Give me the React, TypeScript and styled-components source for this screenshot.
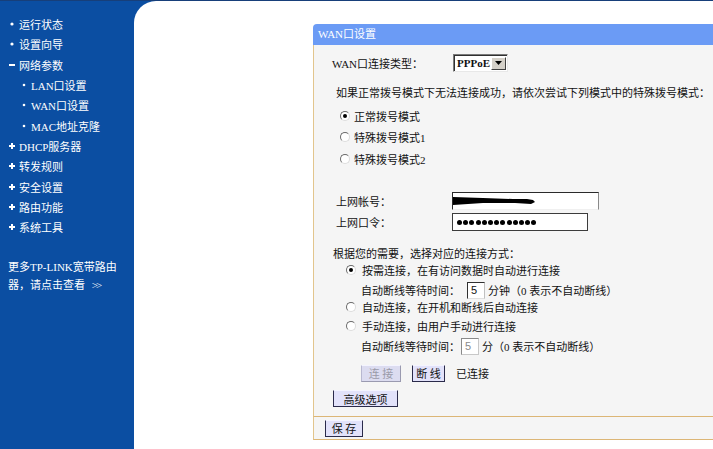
import styled, { createGlobalStyle } from 'styled-components';

const GlobalStyle = createGlobalStyle`
  html, body {
    margin: 0;
    padding: 0;
  }
  body {
    font-family: "Liberation Serif", "Noto Sans CJK SC", serif;
    font-size: 11px;
  }
`;

type MarkKind = 'dot' | 'minus' | 'plus' | 'sub';

const menu: { label: string; mark: MarkKind }[] = [
  { label: '运行状态', mark: 'dot' },
  { label: '设置向导', mark: 'dot' },
  { label: '网络参数', mark: 'minus' },
  { label: 'LAN口设置', mark: 'sub' },
  { label: 'WAN口设置', mark: 'sub' },
  { label: 'MAC地址克隆', mark: 'sub' },
  { label: 'DHCP服务器', mark: 'plus' },
  { label: '转发规则', mark: 'plus' },
  { label: '安全设置', mark: 'plus' },
  { label: '路由功能', mark: 'plus' },
  { label: '系统工具', mark: 'plus' },
];

function MenuMark({ kind }: { kind: MarkKind }) {
  return (
    <svg width="14" height="8" viewBox="0 0 14 8">
      {kind === 'dot' && <circle cx="7" cy="4" r="1.6" fill="#fff" />}
      {kind === 'sub' && <circle cx="7" cy="4" r="1.3" fill="#fff" />}
      {kind === 'minus' && <rect x="4" y="3" width="6" height="2" fill="#fff" />}
      {kind === 'plus' && (
        <>
          <rect x="4" y="3" width="6" height="2" fill="#fff" />
          <rect x="6" y="1" width="2" height="6" fill="#fff" />
        </>
      )}
    </svg>
  );
}

export default function App() {
  return (
    <>
      <GlobalStyle />
      <Frame>
        <Sidebar>
          {menu.map((item) => (
            <MenuItem key={item.label} $sub={item.mark === 'sub'}>
              <MenuMark kind={item.mark} />
              <span>{item.label}</span>
            </MenuItem>
          ))}
          <MoreLink>
            更多TP-LINK宽带路由
            <br />
            器，请点击查看 <Chevrons>&gt;&gt;</Chevrons>
          </MoreLink>
        </Sidebar>

        <Main>
          <Panel>
            <PanelHeader>WAN口设置</PanelHeader>
            <PanelBody>
              <Row $top={8} $h={20} $indent={18}>
                <FieldLabel $w={121}>WAN口连接类型：</FieldLabel>
                <Select>
                  <span>PPPoE</span>
                  <SelectArrow>
                    <svg width="7" height="4" viewBox="0 0 7 4">
                      <polygon points="0,0 7,0 3.5,4" fill="#000" />
                    </svg>
                  </SelectArrow>
                </Select>
              </Row>
              <Row $top={10} $h={18} $indent={22}>
                如果正常拨号模式下无法连接成功，请依次尝试下列模式中的特殊拨号模式：
              </Row>
              <Row $top={6} $h={18} $indent={26} $gap={4}>
                <Radio $checked />
                正常拨号模式
              </Row>
              <Row $top={3} $h={18} $indent={26} $gap={4}>
                <Radio />
                特殊拨号模式1
              </Row>
              <Row $top={4} $h={18} $indent={26} $gap={4}>
                <Radio />
                特殊拨号模式2
              </Row>

              <Row $top={23} $h={20} $indent={22}>
                <FieldLabel $w={116}>上网帐号：</FieldLabel>
                <TextBox $w={147} $variant="account">
                  <svg width="82" height="10" viewBox="0 0 82 10">
                    <path
                      d="M0 1 L30 2 L60 3 L74 3 L80 4 L82 6 L78 8 L62 7 L30 7 L0 9 Z"
                      fill="#000"
                    />
                  </svg>
                </TextBox>
              </Row>
              <Row $top={1} $h={20} $indent={22}>
                <FieldLabel $w={116}>上网口令：</FieldLabel>
                <TextBox $w={136} $variant="password">
                  {Array.from({ length: 13 }, (_, i) => (
                    <Dot key={i} />
                  ))}
                </TextBox>
              </Row>

              <Row $top={13} $h={16} $indent={19}>
                根据您的需要，选择对应的连接方式：
              </Row>
              <Row $top={1} $h={16} $indent={32} $gap={6}>
                <Radio $checked />
                按需连接，在有访问数据时自动进行连接
              </Row>
              <Row $top={3} $h={18} $indent={47}>
                自动断线等待时间：
                <SmallInput $ml={7}>5</SmallInput>
                <Suffix>分钟（0 表示不自动断线）</Suffix>
              </Row>
              <Row $top={0} $h={16} $indent={32} $gap={6}>
                <Radio />
                自动连接，在开机和断线后自动连接
              </Row>
              <Row $top={3} $h={16} $indent={32} $gap={6}>
                <Radio />
                手动连接，由用户手动进行连接
              </Row>
              <Row $top={3} $h={18} $indent={47}>
                自动断线等待时间：
                <SmallInput $ml={1} $disabled>
                  5
                </SmallInput>
                <Suffix>分（0 表示不自动断线）</Suffix>
              </Row>

              <Row $top={9} $h={18} $indent={47} $gap={11}>
                <Button $w={40} $disabled>
                  连 接
                </Button>
                <Button $w={33}>断 线</Button>
                <Status>已连接</Status>
              </Row>
              <Row $top={8} $h={17} $indent={19}>
                <Button $w={65}>高级选项</Button>
              </Row>
            </PanelBody>
            <PanelFooter>
              <Button $w={38}>保 存</Button>
            </PanelFooter>
          </Panel>
        </Main>
      </Frame>
    </>
  );
}

const Frame = styled.div`
  display: flex;
  width: 713px;
  height: 449px;
  box-sizing: border-box;
  overflow: hidden;
  background: #0b4ea2;
  border-top: 1px solid #173f7a;
`;

const Sidebar = styled.nav`
  width: 134px;
  flex-shrink: 0;
  padding-top: 13px;
  color: #fff;
`;

const MenuItem = styled.div<{ $sub?: boolean }>`
  display: flex;
  align-items: center;
  height: 20.3px;
  padding-left: ${({ $sub }) => ($sub ? 17 : 5)}px;
  white-space: nowrap;
`;

const MoreLink = styled.div`
  margin-top: 21px;
  padding-left: 8px;
  line-height: 18px;
  white-space: nowrap;
`;

const Chevrons = styled.span`
  letter-spacing: -2px;
  margin-left: 4px;
`;

const Main = styled.main`
  flex: 1;
  min-width: 0;
  background: #fff;
  border-top-left-radius: 22px;
  padding: 23px 0 0 179px;
  overflow: hidden;
`;

const Panel = styled.section`
  width: 440px;
  color: #111;
`;

const PanelHeader = styled.div`
  height: 21px;
  line-height: 21px;
  padding-left: 5px;
  background: #6b9bf5;
  border-top-left-radius: 4px;
  color: #fff;
`;

const PanelBody = styled.div`
  display: flex;
  flex-direction: column;
  padding-bottom: 9px;
  background: #f5f5f5;
  border-left: 1px solid #e2c58d;
`;

const PanelFooter = styled.div`
  display: flex;
  align-items: center;
  height: 22px;
  padding-left: 11px;
  background: #f5f5f5;
  border: 1px solid #dcb676;
  border-right: none;
  border-left-color: #e2c58d;
`;

const Row = styled.div<{ $top: number; $h: number; $indent: number; $gap?: number }>`
  display: flex;
  align-items: center;
  height: ${({ $h }) => $h}px;
  margin-top: ${({ $top }) => $top}px;
  padding-left: ${({ $indent }) => $indent}px;
  gap: ${({ $gap }) => $gap ?? 0}px;
  white-space: nowrap;
`;

const FieldLabel = styled.span<{ $w: number }>`
  width: ${({ $w }) => $w}px;
  flex-shrink: 0;
`;

const Select = styled.div`
  display: flex;
  align-items: center;
  width: 55px;
  height: 18px;
  box-sizing: border-box;
  padding: 0 1px 0 3px;
  background: #fff;
  border: 1px solid;
  border-color: #7a7a7a #e8e8e8 #e8e8e8 #7a7a7a;
  box-shadow: inset 1px 1px 0 #303030;
  font-weight: bold;
`;

const SelectArrow = styled.span`
  display: flex;
  align-items: center;
  justify-content: center;
  margin-left: auto;
  width: 15px;
  height: 13px;
  box-sizing: border-box;
  background: #d4d0c8;
  border: 1px solid;
  border-color: #fff #404040 #404040 #fff;
`;

const Radio = styled.span<{ $checked?: boolean }>`
  position: relative;
  flex-shrink: 0;
  width: 10px;
  height: 10px;
  box-sizing: border-box;
  border-radius: 50%;
  border: 1px solid;
  border-color: #6a6a6a #dcdcdc #dcdcdc #6a6a6a;
  background: #fff;

  &::after {
    content: '';
    display: ${({ $checked }) => ($checked ? 'block' : 'none')};
    position: absolute;
    left: 2px;
    top: 2px;
    width: 4px;
    height: 4px;
    border-radius: 50%;
    background: #000;
  }
`;

const TextBox = styled.div<{ $w: number; $variant: 'account' | 'password' }>`
  display: flex;
  align-items: center;
  gap: 1.2px;
  width: ${({ $w }) => $w}px;
  height: 18px;
  box-sizing: border-box;
  padding-left: ${({ $variant }) => ($variant === 'password' ? 4 : 0)}px;
  background: #fff;
  border: 1px solid;
  border-color: ${({ $variant }) =>
    $variant === 'password' ? '#3c3c3c' : '#2a2a2a #8a8a8a #f0f0f0 #2a2a2a'};
`;

const Dot = styled.span`
  width: 5px;
  height: 5px;
  border-radius: 50%;
  background: #000;
`;

const SmallInput = styled.span<{ $ml: number; $disabled?: boolean }>`
  display: flex;
  align-items: center;
  width: 18px;
  height: 17px;
  box-sizing: border-box;
  margin-left: ${({ $ml }) => $ml}px;
  padding-left: 3px;
  background: #fff;
  border: 1px solid;
  border-color: ${({ $disabled }) =>
    $disabled ? '#8a8a8a #c8c8c8 #c8c8c8 #8a8a8a' : '#303030 #c0c0c0 #e0e0e0 #303030'};
  color: ${({ $disabled }) => ($disabled ? '#8a8a8a' : '#111')};
  font-family: "Liberation Sans", sans-serif;
`;

const Suffix = styled.span`
  margin-left: 3px;
`;

const Button = styled.span<{ $w: number; $disabled?: boolean }>`
  display: flex;
  align-items: center;
  justify-content: center;
  width: ${({ $w }) => $w}px;
  height: 17px;
  box-sizing: border-box;
  background: ${({ $disabled }) => ($disabled ? '#dcdcf0' : '#e2e2fa')};
  border: 1px solid;
  border-color: ${({ $disabled }) =>
    $disabled ? '#f4f4ff #9a9ab0 #9a9ab0 #b8b8d0' : '#f4f4ff #2a2a4a #2a2a4a #2a2a4a'};
  color: ${({ $disabled }) => ($disabled ? '#9a9aa8' : '#111')};
  white-space: pre;
`;

const Status = styled.span`
  margin-left: 0;
`;
